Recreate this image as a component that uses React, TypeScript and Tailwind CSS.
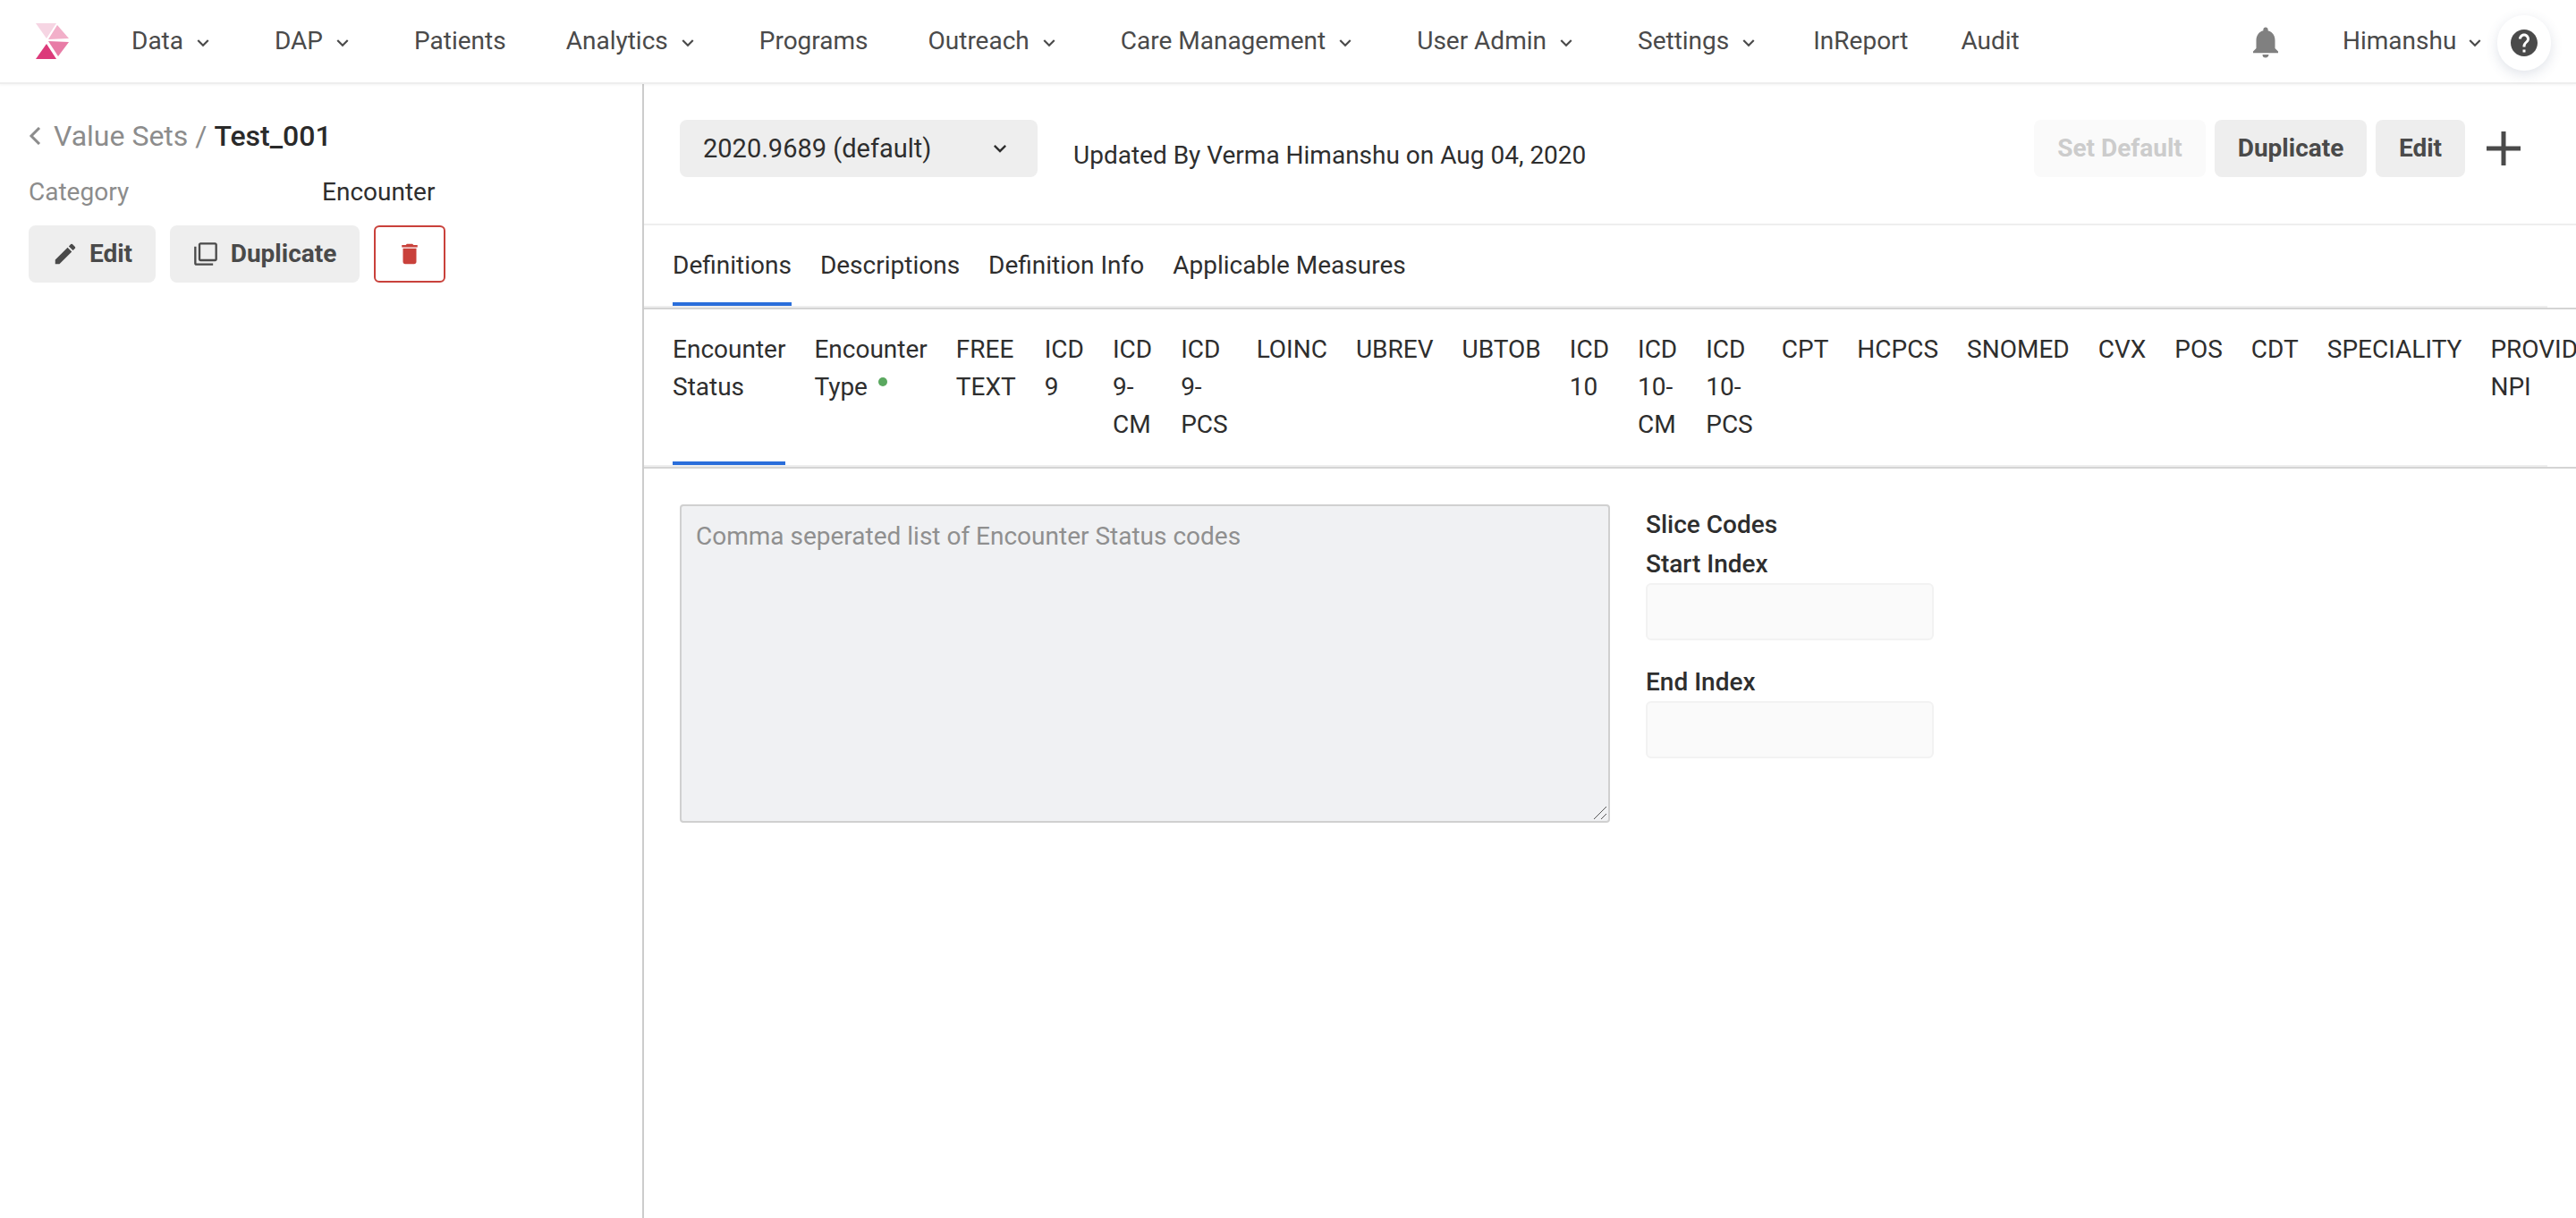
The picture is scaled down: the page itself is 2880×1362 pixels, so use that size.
import { MdEdit, MdFilterNone, MdDelete, MdNotifications, MdHelp, MdKeyboardArrowDown } from "react-icons/md";

const navItems = [
  { label: "Data", menu: true },
  { label: "DAP", menu: true },
  { label: "Patients" },
  { label: "Analytics", menu: true },
  { label: "Programs" },
  { label: "Outreach", menu: true },
  { label: "Care Management", menu: true },
  { label: "User Admin", menu: true },
  { label: "Settings", menu: true, tweak: "-mr-[8px]" },
  { label: "InReport", tweak: "-mr-[8px]" },
  { label: "Audit" },
];

const codeTabs = [
  "Encounter Status",
  "Encounter Type",
  "FREE TEXT",
  "ICD 9",
  "ICD 9-CM",
  "ICD 9-PCS",
  "LOINC",
  "UBREV",
  "UBTOB",
  "ICD 10",
  "ICD 10-CM",
  "ICD 10-PCS",
  "CPT",
  "HCPCS",
  "SNOMED",
  "CVX",
  "POS",
  "CDT",
  "SPECIALITY",
  "PROVIDER NPI",
];

function Logo() {
  return (
    <svg width="40" height="42" viewBox="40 25 40 42" className="shrink-0">
      <polygon points="40,26 63,26 52,43" fill="#f6d5e3" />
      <polygon points="64,28 77,43 54,44" fill="#f2afc9" />
      <polygon points="54,46 77,47 65,63" fill="#e87ca6" />
      <polygon points="52,49 63,66 40,66" fill="#dc3a7a" />
    </svg>
  );
}

function TopNav() {
  return (
    <header className="relative flex h-[94px] shrink-0 items-center border-b-2 border-[#eeeeee] bg-white pl-10 text-[#4a4a4a] shadow-[0_1px_3px_rgba(0,0,0,0.05)]">
      <Logo />
      <nav className="ml-[67px] flex items-center gap-[67px]">
        {navItems.map((item) => (
          <a key={item.label} className={`flex items-center whitespace-nowrap ${item.tweak ?? ""}`}>
            {item.label}
            {item.menu && <MdKeyboardArrowDown className="ml-[9px] mt-1 text-[26px]" />}
          </a>
        ))}
      </nav>
      <MdNotifications className="absolute left-[2512px] top-[26px] text-[42px] text-[#808080]" />
      <a className="absolute left-[2619px] top-[25px] flex items-center whitespace-nowrap">
        Himanshu
        <MdKeyboardArrowDown className="ml-[8px] mt-1 text-[26px]" />
      </a>
      <button className="absolute left-[2792px] top-[17px] z-10 flex h-[62px] w-[60px] items-center justify-center rounded-full bg-white shadow-[0_4px_14px_rgba(60,80,120,0.16)]">
        <MdHelp className="text-[36px] text-[#4a4a4a]" />
      </button>
    </header>
  );
}

function Sidebar() {
  return (
    <aside className="w-[720px] shrink-0 border-r-2 border-[#cccccc] pl-8 pt-[36px]">
      <div className="flex h-[44px] items-center text-[32px]">
        <svg width="14" height="20" viewBox="0 0 14 20" className="mr-[14px] shrink-0" fill="none" stroke="#8c8c8c" strokeWidth="3">
          <path d="M12 1 L3 10 L12 19" />
        </svg>
        <span className="text-[#8c8c8c]">Value Sets /&nbsp;</span>
        <span className="font-medium text-[#2a2a2a]">Test_001</span>
      </div>
      <div className="mt-[20px] flex h-[42px] items-center">
        <span className="w-[328px] text-[#8c8c8c]">Category</span>
        <span className="text-[#2e2e2e]">Encounter</span>
      </div>
      <div className="mt-[16px] flex gap-4">
        <button className="flex h-16 w-[142px] items-center justify-center gap-3 rounded-lg bg-[#eeeeee] font-bold text-[#4a4a4a]">
          <MdEdit className="text-[30px]" />
          Edit
        </button>
        <button className="flex h-16 w-[212px] items-center justify-center gap-[14px] rounded-lg bg-[#eeeeee] font-bold text-[#4a4a4a]">
          <MdFilterNone className="text-[28px]" />
          Duplicate
        </button>
        <button className="flex h-16 w-[80px] items-center justify-center rounded-md border-2 border-[#c9413b] bg-white text-[#c9413b]">
          <MdDelete className="text-[30px]" />
        </button>
      </div>
    </aside>
  );
}

function VersionBar() {
  return (
    <div className="flex h-[158px] shrink-0 items-start border-b-2 border-[#eeeeee] pl-10 pr-[62px] pt-10">
      <button className="flex h-16 w-[400px] items-center justify-between rounded-lg bg-[#eeeeee] pl-[26px] pr-[28px] text-[29px] text-[#2e2e2e]">
        2020.9689 (default)
        <MdKeyboardArrowDown className="text-[28px]" />
      </button>
      <span className="ml-10 mt-[19px] text-[#2e2e2e]">Updated By Verma Himanshu on Aug 04, 2020</span>
      <div className="ml-auto flex items-center gap-[10px]">
        <button className="h-16 w-[192px] rounded-lg bg-[#fafafa] font-bold text-[#cccccc]">Set Default</button>
        <button className="h-16 w-[170px] rounded-lg bg-[#eeeeee] font-bold text-[#4a4a4a]">Duplicate</button>
        <button className="h-16 w-[100px] rounded-lg bg-[#eeeeee] font-bold text-[#4a4a4a]">Edit</button>
        <svg width="38" height="38" viewBox="0 0 38 38" className="ml-[14px]" fill="#4a4a4a">
          <rect x="16.5" y="0" width="5" height="38" />
          <rect x="0" y="16.5" width="38" height="5" />
        </svg>
      </div>
    </div>
  );
}

function MainTabs() {
  const tabs = ["Definitions", "Descriptions", "Definition Info", "Applicable Measures"];
  return (
    <div className="h-[94px] shrink-0 border-b-2 border-[#d4d4d4] text-[#2e2e2e]">
      <div className="flex h-[92px] w-[2128px] gap-8 border-b-2 border-[#eeeeee] pl-8">
        {tabs.map((tab, i) => (
          <div key={tab} className={`h-[90px] pt-6 ${i === 0 ? "border-b-4 border-[#2a6edb]" : ""}`}>
            {tab}
          </div>
        ))}
      </div>
    </div>
  );
}

function CodeTabs() {
  return (
    <div className="h-[178px] shrink-0 overflow-hidden border-b-2 border-[#d4d4d4] text-[#2e2e2e]">
      <div className="flex h-[176px] w-[2128px] gap-8 border-b-2 border-[#eeeeee] pl-8 pt-6">
        {codeTabs.map((tab, i) => (
          <div key={tab} className={`h-[150px] w-min shrink-0 ${i === 0 ? "border-b-4 border-[#2a6edb]" : ""}`}>
            {tab}
            {tab === "Encounter Type" && (
              <span className="relative -top-[10px] ml-[12px] inline-block size-[10px] rounded-full bg-[#5aa85f]" />
            )}
          </div>
        ))}
      </div>
    </div>
  );
}

function CodesForm() {
  return (
    <div className="flex gap-10 pl-10 pt-10">
      <div className="relative h-[356px] w-[1040px]">
        <textarea
          className="size-full resize-none rounded border-2 border-[#d0d0d0] bg-[#f0f1f3] px-4 py-[13px] placeholder:text-[#8f8f8f]"
          placeholder="Comma seperated list of Encounter Status codes"
        />
        <svg width="16" height="16" viewBox="0 0 16 16" className="absolute bottom-[3px] right-[3px]" stroke="#555555" strokeWidth="1" fill="none">
          <path d="M1 15 L15 1 M9 15 L15 9" />
        </svg>
      </div>
      <div className="w-[322px] pt-[2px] text-[#2e2e2e]">
        <div className="font-medium">Slice Codes</div>
        <label className="mt-[2px] block font-medium">Start Index</label>
        <input className="block h-16 w-full rounded-md border-2 border-[#f2f2f2] bg-[#fafafa]" />
        <label className="mt-[26px] block font-medium">End Index</label>
        <input className="block h-16 w-full rounded-md border-2 border-[#f2f2f2] bg-[#fafafa]" />
      </div>
    </div>
  );
}

export default function App() {
  return (
    <div className="flex h-screen flex-col overflow-hidden bg-white text-[28px] leading-[42px] [font-family:Roboto,sans-serif]">
      <TopNav />
      <div className="flex min-h-0 flex-1">
        <Sidebar />
        <main className="min-w-0 flex-1">
          <VersionBar />
          <MainTabs />
          <CodeTabs />
          <CodesForm />
        </main>
      </div>
    </div>
  );
}
